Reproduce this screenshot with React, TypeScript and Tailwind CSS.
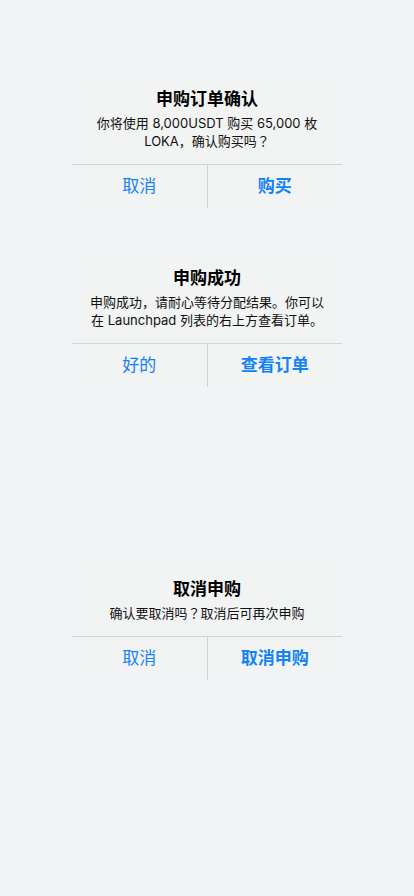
import React from "react";

const font = { fontFamily: 'Inter, "Noto Sans CJK SC", sans-serif' };

function Q() {
  return <span className="font-['Noto_Sans_CJK_JP',sans-serif]">？</span>;
}

function Dialog({
  title,
  message,
  left,
  right,
  className,
}: {
  title: string;
  message: React.ReactNode;
  left: string;
  right: string;
  className?: string;
}) {
  return (
    <div className={`w-[270px] rounded-[14px] bg-[#f2f3f3] overflow-hidden ${className ?? ""}`}>
      <div className="px-4 pt-[15px] pb-[14px] flex flex-col items-center text-center">
        <div className="text-[17px] leading-[22px] font-bold text-black">{title}</div>
        <div className="mt-1 text-[13px] leading-[18px] text-[#111111]">{message}</div>
      </div>
      <div className="flex h-[44px] border-t border-[#d2d3d5]">
        <button className="flex-1 flex items-center justify-center text-[17px] text-[#1282f5]">
          {left}
        </button>
        <div className="w-px bg-[#d2d3d5]" />
        <button className="flex-1 flex items-center justify-center text-[17px] font-bold text-[#1282f5]">
          {right}
        </button>
      </div>
    </div>
  );
}

export default function App() {
  return (
    <div className="min-h-[896px] w-full bg-[#f2f5f8] flex flex-col items-center" style={font}>
      <Dialog
        className="mt-[73px]"
        title="申购订单确认"
        message={
          <>
            你将使用 8,000USDT 购买 65,000 枚
            <br />
            LOKA，确认购买吗<Q />
          </>
        }
        left="取消"
        right="购买"
      />
      <Dialog
        className="mt-[44px]"
        title="申购成功"
        message="申购成功，请耐心等待分配结果。你可以在 Launchpad 列表的右上方查看订单。"
        left="好的"
        right="查看订单"
      />
      <Dialog
        className="mt-[176px]"
        title="取消申购"
        message={
          <>
            确认要取消吗<Q />取消后可再次申购
          </>
        }
        left="取消"
        right="取消申购"
      />
    </div>
  );
}
